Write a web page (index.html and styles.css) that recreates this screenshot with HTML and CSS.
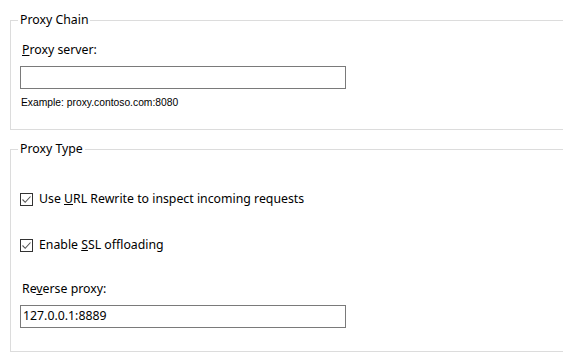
FILE: index.html
```html
<!DOCTYPE html>
<html>
<head>
<meta charset="utf-8">
<link rel="stylesheet" href="styles.css">
</head>
<body>
<fieldset class="group group-chain">
  <legend class="legend">Proxy Chain</legend>
  <div class="label label-server"><u>P</u>roxy server:</div>
  <div class="textbox"></div>
  <div class="hint">Example: proxy.contoso.com:8080</div>
</fieldset>
<fieldset class="group group-type">
  <legend class="legend">Proxy Type</legend>
  <div class="check check-first">
    <span class="box"><svg width="11" height="11" viewBox="0 0 11 11"><polyline points="1.5,5.5 4.2,8.3 9.5,2.5" fill="none" stroke="#555" stroke-width="1.1"/></svg></span>
    <span>Use <u>U</u>RL Rewrite to inspect incoming requests</span>
  </div>
  <div class="check check-second">
    <span class="box"><svg width="11" height="11" viewBox="0 0 11 11"><polyline points="1.5,5.5 4.2,8.3 9.5,2.5" fill="none" stroke="#555" stroke-width="1.1"/></svg></span>
    <span>Enable <u>S</u>SL offloading</span>
  </div>
  <div class="label label-reverse">Re<u>v</u>erse proxy:</div>
  <div class="textbox">127.0.0.1:8889</div>
</fieldset>
</body>
</html>
```
FILE: styles.css
```css
html, body {
  margin: 0;
  padding: 0;
  background: #fff;
}
body {
  width: 563px;
  height: 355px;
  overflow: hidden;
  font-family: "Noto Sans", "Open Sans", sans-serif;
  font-size: 12.3px;
  color: #000;
}
.group {
  margin: 0 0 0 10px;
  padding: 0 0 0 9px;
  border: 1px solid #dcdcdc;
  border-right: none;
  width: 553px;
  box-sizing: border-box;
  min-width: 0;
}
.group-chain {
  margin-top: 12px;
  height: 118px;
}
.group-type {
  margin-top: 11px;
  height: 211px;
}
.legend {
  margin-left: -2px;
  padding: 0 2px;
  line-height: 16px;
  height: 16px;
}
.label {
  line-height: 16px;
  padding-left: 2px;
}
.label-server {
  margin-top: 14px;
}
.textbox {
  width: 326px;
  height: 23px;
  box-sizing: border-box;
  border: 1px solid #7a7a7a;
  margin-top: 8px;
  padding-left: 2px;
  line-height: 20px;
}
.hint {
  font-family: "Liberation Sans", Arial, sans-serif;
  font-size: 10.3px;
  margin-top: 8px;
  padding-left: 1px;
}
.check {
  display: flex;
  align-items: center;
  gap: 6px;
  line-height: 16px;
}
.check-first {
  margin-top: 34px;
}
.check-second {
  margin-top: 30px;
}
.box {
  width: 13px;
  height: 13px;
  box-sizing: border-box;
  border: 1px solid #333;
  display: flex;
  align-items: center;
  justify-content: center;
  background: #fff;
}
.box svg {
  display: block;
}
.label-reverse {
  margin-top: 28px;
}
```
